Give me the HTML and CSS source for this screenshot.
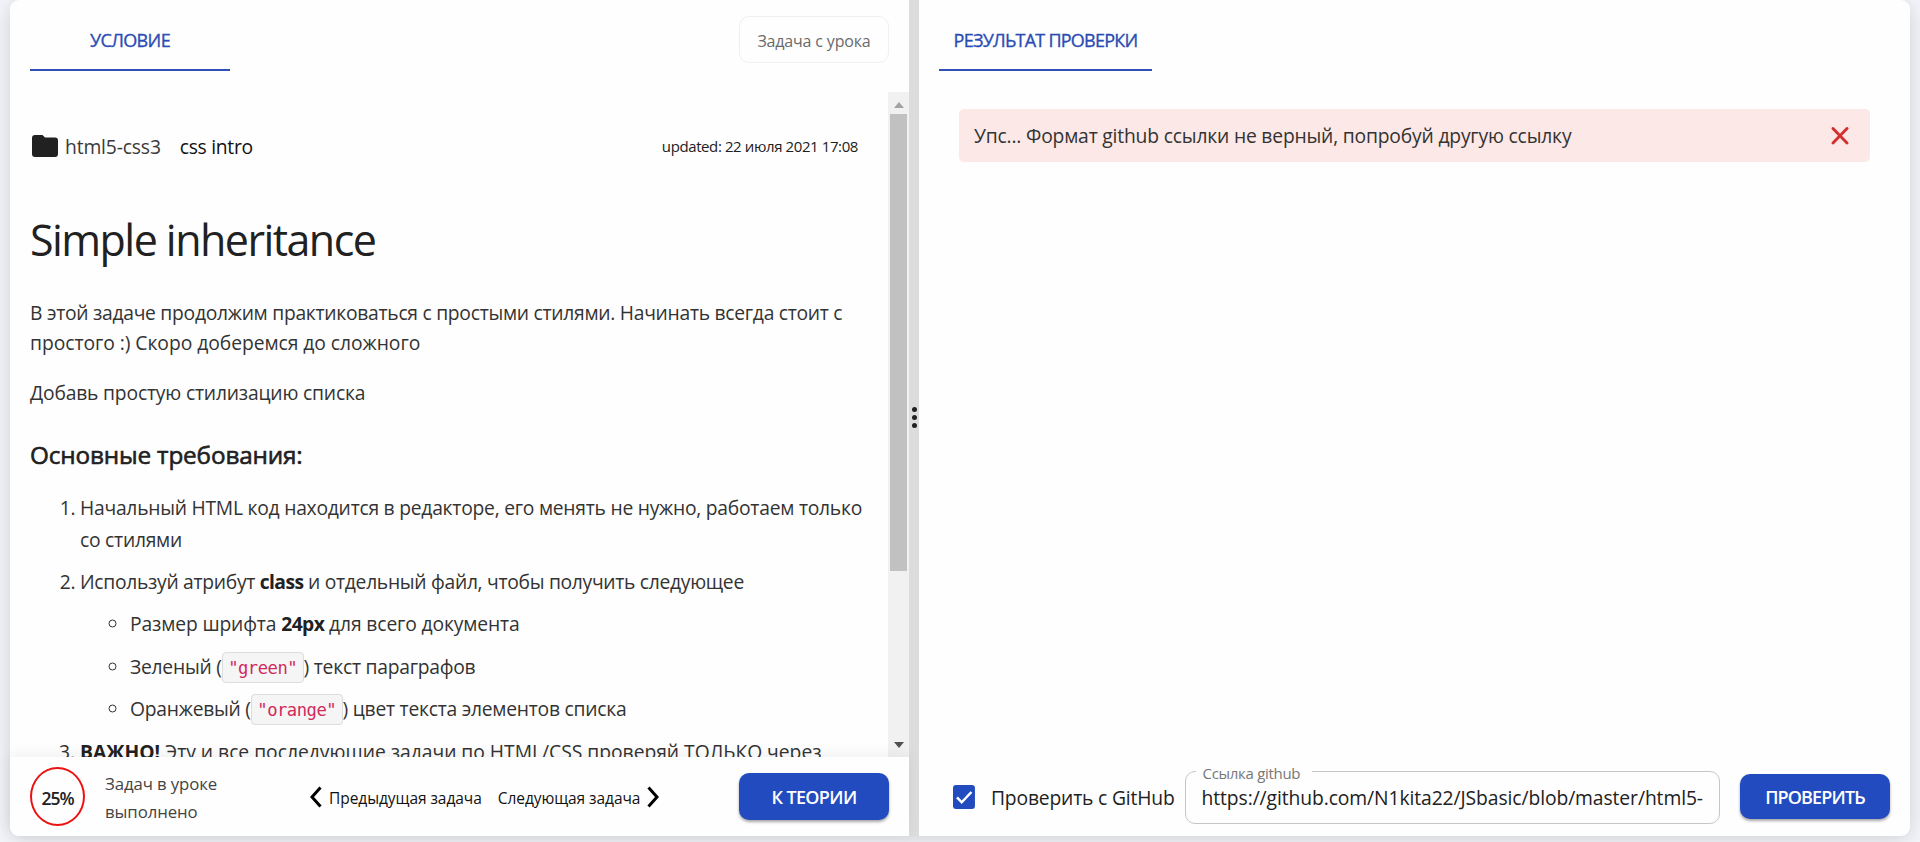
FILE: index.html
```
<!DOCTYPE html>
<html lang="ru">
<head>
<meta charset="utf-8">
<title>Simple inheritance</title>
<link rel="stylesheet" href="styles.css">
</head>
<body>
<main class="workspace">
  <section class="panel panel-task">
    <header class="panel-header">
      <div class="tab tab-task">УСЛОВИЕ</div>
      <div class="chip">Задача с урока</div>
    </header>
    <div class="scroll-area">
      <article class="content">
        <div class="crumbs">
          <svg class="folder" viewBox="0 0 26 22"><path d="M3 0h7.500l2.500 2.500h10a3 3 0 0 1 3 3V19a3 3 0 0 1-3 3H3a3 3 0 0 1-3-3V3a3 3 0 0 1 3-3z" fill="#212121"/></svg>
          <span class="crumb">html5-css3</span>
          <span class="crumb crumb-current">css intro</span>
          <span class="updated">updated: 22 июля 2021 17:08</span>
        </div>
        <h1 class="title">Simple inheritance</h1>
        <p class="text">В этой задаче продолжим практиковаться с простыми стилями. Начинать всегда стоит с <span class="loose">простого :) Скоро доберемся до сложного</span></p>
        <p class="text text-short">Добавь простую стилизацию списка</p>
        <h3 class="subtitle">Основные требования:</h3>
        <ol class="list">
          <li>Начальный HTML код находится в редакторе, его менять не нужно, работаем только со стилями</li>
          <li class="item-tight">Используй атрибут <b>class</b> и отдельный файл, чтобы получить следующее
            <ul class="sublist">
              <li class="item-loose">Размер шрифта <b>24px</b> для всего документа</li>
              <li>Зеленый (<code class="code">"green"</code>) текст параграфов</li>
              <li>Оранжевый (<code class="code">"orange"</code>) цвет текста элементов списка</li>
            </ul>
          </li>
          <li class="item-important"><b>ВАЖНО!</b> Эту и все последующие задачи по HTML/CSS проверяй ТОЛЬКО через</li>
        </ol>
      </article>
      <div class="scrollbar">
        <svg class="scroll-arrow" viewBox="0 0 10 6"><path d="M0 6 5 0l5 6z" fill="#a3a3a3"/></svg>
        <div class="thumb"></div>
        <svg class="scroll-arrow scroll-down" viewBox="0 0 10 6"><path d="M0 0h10L5 6z" fill="#505050"/></svg>
      </div>
    </div>
    <footer class="task-footer">
      <div class="progress">25%</div>
      <div class="progress-text">Задач в уроке выполнено</div>
      <nav class="pager">
        <a class="pager-link"><svg class="chevron" viewBox="0 0 12 22"><path d="M10.500 1.500 2 11l8.500 9.500" fill="none" stroke="#000" stroke-width="3"/></svg><span>Предыдущая задача</span></a>
        <a class="pager-link"><span>Следующая задача</span><svg class="chevron" viewBox="0 0 12 22"><path d="M1.500 1.500 10 11l-8.500 9.500" fill="none" stroke="#000" stroke-width="3"/></svg></a>
      </nav>
      <button class="button button-theory">К ТЕОРИИ</button>
    </footer>
  </section>
  <div class="divider"><i class="dot"></i><i class="dot"></i><i class="dot"></i></div>
  <section class="panel panel-result">
    <header class="panel-header">
      <div class="tab tab-result">РЕЗУЛЬТАТ ПРОВЕРКИ</div>
    </header>
    <div class="result-body">
      <div class="alert">
        <span class="alert-text">Упс... Формат github ссылки не верный, попробуй другую ссылку</span>
        <svg class="close" viewBox="0 0 18 18"><path d="M2 1.500l14 14.500M16 1.500 2 16" stroke="#d32f2f" stroke-width="2.900" stroke-linecap="round"/></svg>
      </div>
    </div>
    <footer class="result-footer">
      <svg class="checkbox" viewBox="0 0 22 24"><rect width="22" height="24" rx="3" fill="#234bc0"/><path d="M4 12.300l4.700 5L18.500 7" fill="none" stroke="#fff" stroke-width="2.500"/></svg>
      <span class="check-label">Проверить с GitHub</span>
      <fieldset class="field">
        <legend class="field-label">Ссылка github</legend>
        <div class="field-value">https://github.com/N1kita22/JSbasic/blob/master/html5-</div>
      </fieldset>
      <button class="button button-check">ПРОВЕРИТЬ</button>
    </footer>
  </section>
</main>
</body>
</html>
```
FILE: styles.css
```
* { box-sizing: border-box; }
body {
  margin: 0;
  height: 842px;
  overflow: hidden;
  background: #f5f6fb;
  color: #212121;
  font: 19.3px/30px "Open Sans", "Noto Sans", sans-serif;
  letter-spacing: -.17px;
}
.workspace {
  display: flex;
  height: 836px;
  margin: 0 10px;
  border-radius: 9px;
  background: #fefefe;
  box-shadow: 0 3px 22px rgba(30, 40, 40, .19);
}
.panel { display: flex; flex-direction: column; min-width: 0; }
.panel-task { width: 899px; }
.panel-result { flex: 1; }
.panel-header {
  display: flex;
  justify-content: space-between;
  height: 92px;
  flex: none;
  padding: 0 20px;
}
.tab {
  height: 71px;
  padding-top: 25px;
  border-bottom: 2px solid #304fb5;
  color: #2a4cb4;
  font-size: 18px;
  text-align: center;
  -webkit-text-stroke: .35px #2a4cb4;
}
.tab-task { width: 200px; letter-spacing: -.6px; }
.tab-result { width: 213px; letter-spacing: -.76px; }
.chip {
  width: 150px;
  height: 47px;
  margin-top: 16px;
  border: 1px solid #f0f0f0;
  border-radius: 10px;
  color: #6a6a6a;
  font-size: 16px;
  line-height: 49px;
  text-align: center;
}
.scroll-area { display: flex; height: 665px; overflow: hidden; }
.content { flex: 1; padding: 39px 20px 0; }
.crumbs { display: flex; align-items: center; height: 30px; padding-right: 10px; }
.folder { width: 26px; height: 22px; margin: 0 7px 0 2px; }
.crumb { padding-top: 2px; color: #3a3a3a; letter-spacing: -.15px; }
.crumb-current { margin-left: 19px; color: #111; letter-spacing: -.3px; }
.updated { margin-left: auto; font-size: 15px; letter-spacing: -.4px; }
.title {
  margin: 52px 0 31px;
  font-size: 43px;
  font-weight: 400;
  line-height: 54px;
  letter-spacing: -1.55px;
}
.text { margin: 0 0 20px; color: #333; letter-spacing: -.28px; }
.text-short { letter-spacing: -.19px; }
.loose { letter-spacing: -.05px; }
.subtitle {
  margin: 32px 0 22px;
  font-size: 24.3px;
  font-weight: 400;
  line-height: 30px;
  letter-spacing: -.15px;
  -webkit-text-stroke: .6px #212121;
}
.list, .sublist { margin: 0; padding-left: 50px; color: #333; line-height: 31.6px; letter-spacing: -.25px; }
.list > li { margin-bottom: 10.8px; }
.list .item-tight { letter-spacing: -.3px; }
.list .item-loose { letter-spacing: -.14px; }
.list .item-important { letter-spacing: -.02px; }
.sublist { padding-top: 10.8px; }
.sublist > li + li { margin-top: 10.8px; }
.list b { color: #212121; letter-spacing: -.6px; }
.list .item-important b { letter-spacing: 0; }
.code {
  padding: 5px 5.5px 4px;
  border: 1px solid #ddd;
  border-radius: 4px;
  background: #f5f5f5;
  color: #d02a5c;
  font: 17.2px/18px "DejaVu Sans Mono", monospace;
  letter-spacing: -.5px;
}
.scrollbar {
  display: flex;
  flex-direction: column;
  align-items: center;
  width: 21px;
  padding: 10px 0 8px;
  background: #f1f1f1;
}
.scroll-arrow { width: 10px; height: 6px; }
.thumb { width: 17px; height: 457px; margin-top: 6px; background: #c1c1c1; }
.scroll-down { margin-top: auto; margin-bottom: 1px; }
.task-footer {
  position: relative;
  display: flex;
  align-items: center;
  height: 79px;
  padding: 0 20px;
  border-radius: 0 0 0 9px;
  background: #fefefe;
  box-shadow: 0 -3px 14px rgba(0, 0, 0, .06);
}
.progress {
  width: 55px;
  height: 59px;
  border: 2px solid #ec1212;
  border-radius: 50%;
  font-size: 17.5px;
  font-weight: 600;
  line-height: 59px;
  text-align: center;
  letter-spacing: -1px;
}
.progress-text {
  width: 135px;
  margin-left: 20px;
  padding-top: 2px;
  color: #444;
  font-size: 16.8px;
  line-height: 27.5px;
  letter-spacing: -.1px;
}
.pager { display: flex; gap: 16px; margin-left: 70px; color: #111; font-size: 15.5px; letter-spacing: -.06px; }
.pager-link { display: flex; align-items: center; gap: 7px; white-space: nowrap; }
.pager-link span { padding-top: 2px; }
.chevron { width: 12px; height: 22px; }
.button {
  width: 150px;
  flex: none;
  padding: 0;
  border: 0;
  border-radius: 10px;
  background: #234bc0;
  box-shadow: 0 2px 3px rgba(0, 0, 0, .35);
  color: #fff;
  font: 600 18px/28px "Open Sans", "Noto Sans", sans-serif;
}
.button-theory { height: 47px; margin-left: auto; letter-spacing: -.65px; }
.button-check { height: 45px; margin-left: 20px; letter-spacing: -.85px; }
.divider {
  display: flex;
  flex-direction: column;
  align-items: center;
  justify-content: center;
  gap: 3px;
  width: 10px;
  padding-bottom: 2px;
  background: #dcdcdc;
}
.dot { width: 5px; height: 5px; border-radius: 50%; background: #212121; }
.result-body { flex: 1; padding: 17px 40px 0; }
.alert {
  display: flex;
  align-items: center;
  justify-content: space-between;
  height: 53px;
  padding: 0 21px 0 15px;
  border-radius: 5px;
  background: #fce8e6;
  color: #333;
}
.alert-text { padding-top: 1px; letter-spacing: -.19px; }
.close { width: 18px; height: 18px; }
.result-footer { display: flex; align-items: center; height: 79px; padding: 0 20px 0 34px; }
.checkbox { width: 22px; height: 24px; }
.check-label { margin: 2px 0 0 16px; width: 194px; white-space: nowrap; }
.field {
  width: 535px;
  height: 62px;
  margin: -8px 0 0;
  padding: 0 16px;
  border: 1px solid #c6c6c6;
  border-radius: 10px;
}
.field-label {
  width: 116px;
  margin-left: -6px;
  padding: 2px 0 0 7px;
  color: #777;
  font-size: 15px;
  line-height: 18px;
  letter-spacing: -.3px;
}
.field-value { padding-top: 1px; overflow: hidden; white-space: nowrap; letter-spacing: -.09px; }
```
